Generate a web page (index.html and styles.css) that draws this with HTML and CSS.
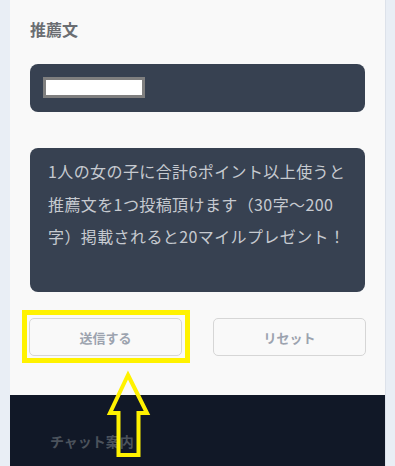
FILE: index.html
```html
<!DOCTYPE html>
<html lang="ja">
<head>
<meta charset="utf-8">
<title>推薦文</title>
<link rel="stylesheet" href="styles.css">
</head>
<body>
<div class="page">
  <section class="form">
    <h2 class="title">推薦文</h2>
    <div class="input-box"><span class="input-img"></span></div>
    <div class="text-box">1人の女の子に合計6ポイント以上使うと<br>推薦文を1つ投稿頂けます（30字～200<br>字）掲載されると20マイルプレゼント！</div>
    <div class="buttons">
      <button class="btn" type="button">送信する</button>
      <button class="btn" type="button">リセット</button>
    </div>
  </section>
  <footer class="footer">
    <p class="footer-title">チャット案内</p>
  </footer>
</div>
<svg class="annotation" width="395" height="466" viewBox="0 0 395 466" aria-hidden="true">
  <rect x="24.5" y="312.5" width="163" height="48" fill="none" stroke="#fff200" stroke-width="5"/>
  <polygon points="128,375 147,413 138.5,413 138.5,455 118.5,455 118.5,413 110,413" fill="none" stroke="#fff200" stroke-width="4" stroke-linejoin="miter"/>
</svg>
</body>
</html>
```

FILE: styles.css
```css
html, body {
  margin: 0;
  padding: 0;
}
body {
  background: #e9eef5;
  width: 395px;
  height: 466px;
  overflow: hidden;
  position: relative;
  font-family: "Noto Sans CJK JP", "Noto Sans", sans-serif;
}
.page {
  margin-left: 10px;
  width: 375px;
  height: 466px;
  overflow: hidden;
  background: #f9f9f9;
  border-right: 1px solid #dde2ea;
}
.form {
  padding: 19px 20px 39px;
  display: flex;
  flex-direction: column;
}
.title {
  margin: 0;
  font-size: 16px;
  line-height: 20px;
  font-weight: 700;
  color: #6b6e72;
}
.input-box {
  margin-top: 25px;
  height: 48px;
  box-sizing: border-box;
  padding: 13px 13px;
  background: #374151;
  border-radius: 8px;
}
.input-img {
  display: block;
  width: 96px;
  height: 15px;
  background: #fff;
  border: 3px solid #7f7f7f;
}
.text-box {
  margin-top: 36px;
  height: 144px;
  box-sizing: border-box;
  padding: 7px 18px;
  background: #374151;
  border-radius: 8px;
  color: #c6cad0;
  font-size: 16px;
  line-height: 32.5px;
  letter-spacing: 0.4px;
  white-space: nowrap;
}
.buttons {
  margin: 26px -1px 0;
  display: flex;
  justify-content: space-between;
}
.btn {
  width: 153px;
  height: 38px;
  box-sizing: border-box;
  background: #f9f9f9;
  border: 1px solid #d6d6d6;
  border-radius: 5px;
  color: #9ca3af;
  font-family: "Noto Sans CJK JP", "Noto Sans", sans-serif;
  font-size: 13px;
  font-weight: 700;
  padding: 0;
}
.footer {
  background: #111827;
  height: 35px;
  padding: 36px 40px 0;
}
.footer-title {
  margin: 0;
  font-size: 14px;
  line-height: 20px;
  font-weight: 700;
  color: #4b525c;
}
.annotation {
  position: absolute;
  left: 0;
  top: 0;
  pointer-events: none;
}
```
